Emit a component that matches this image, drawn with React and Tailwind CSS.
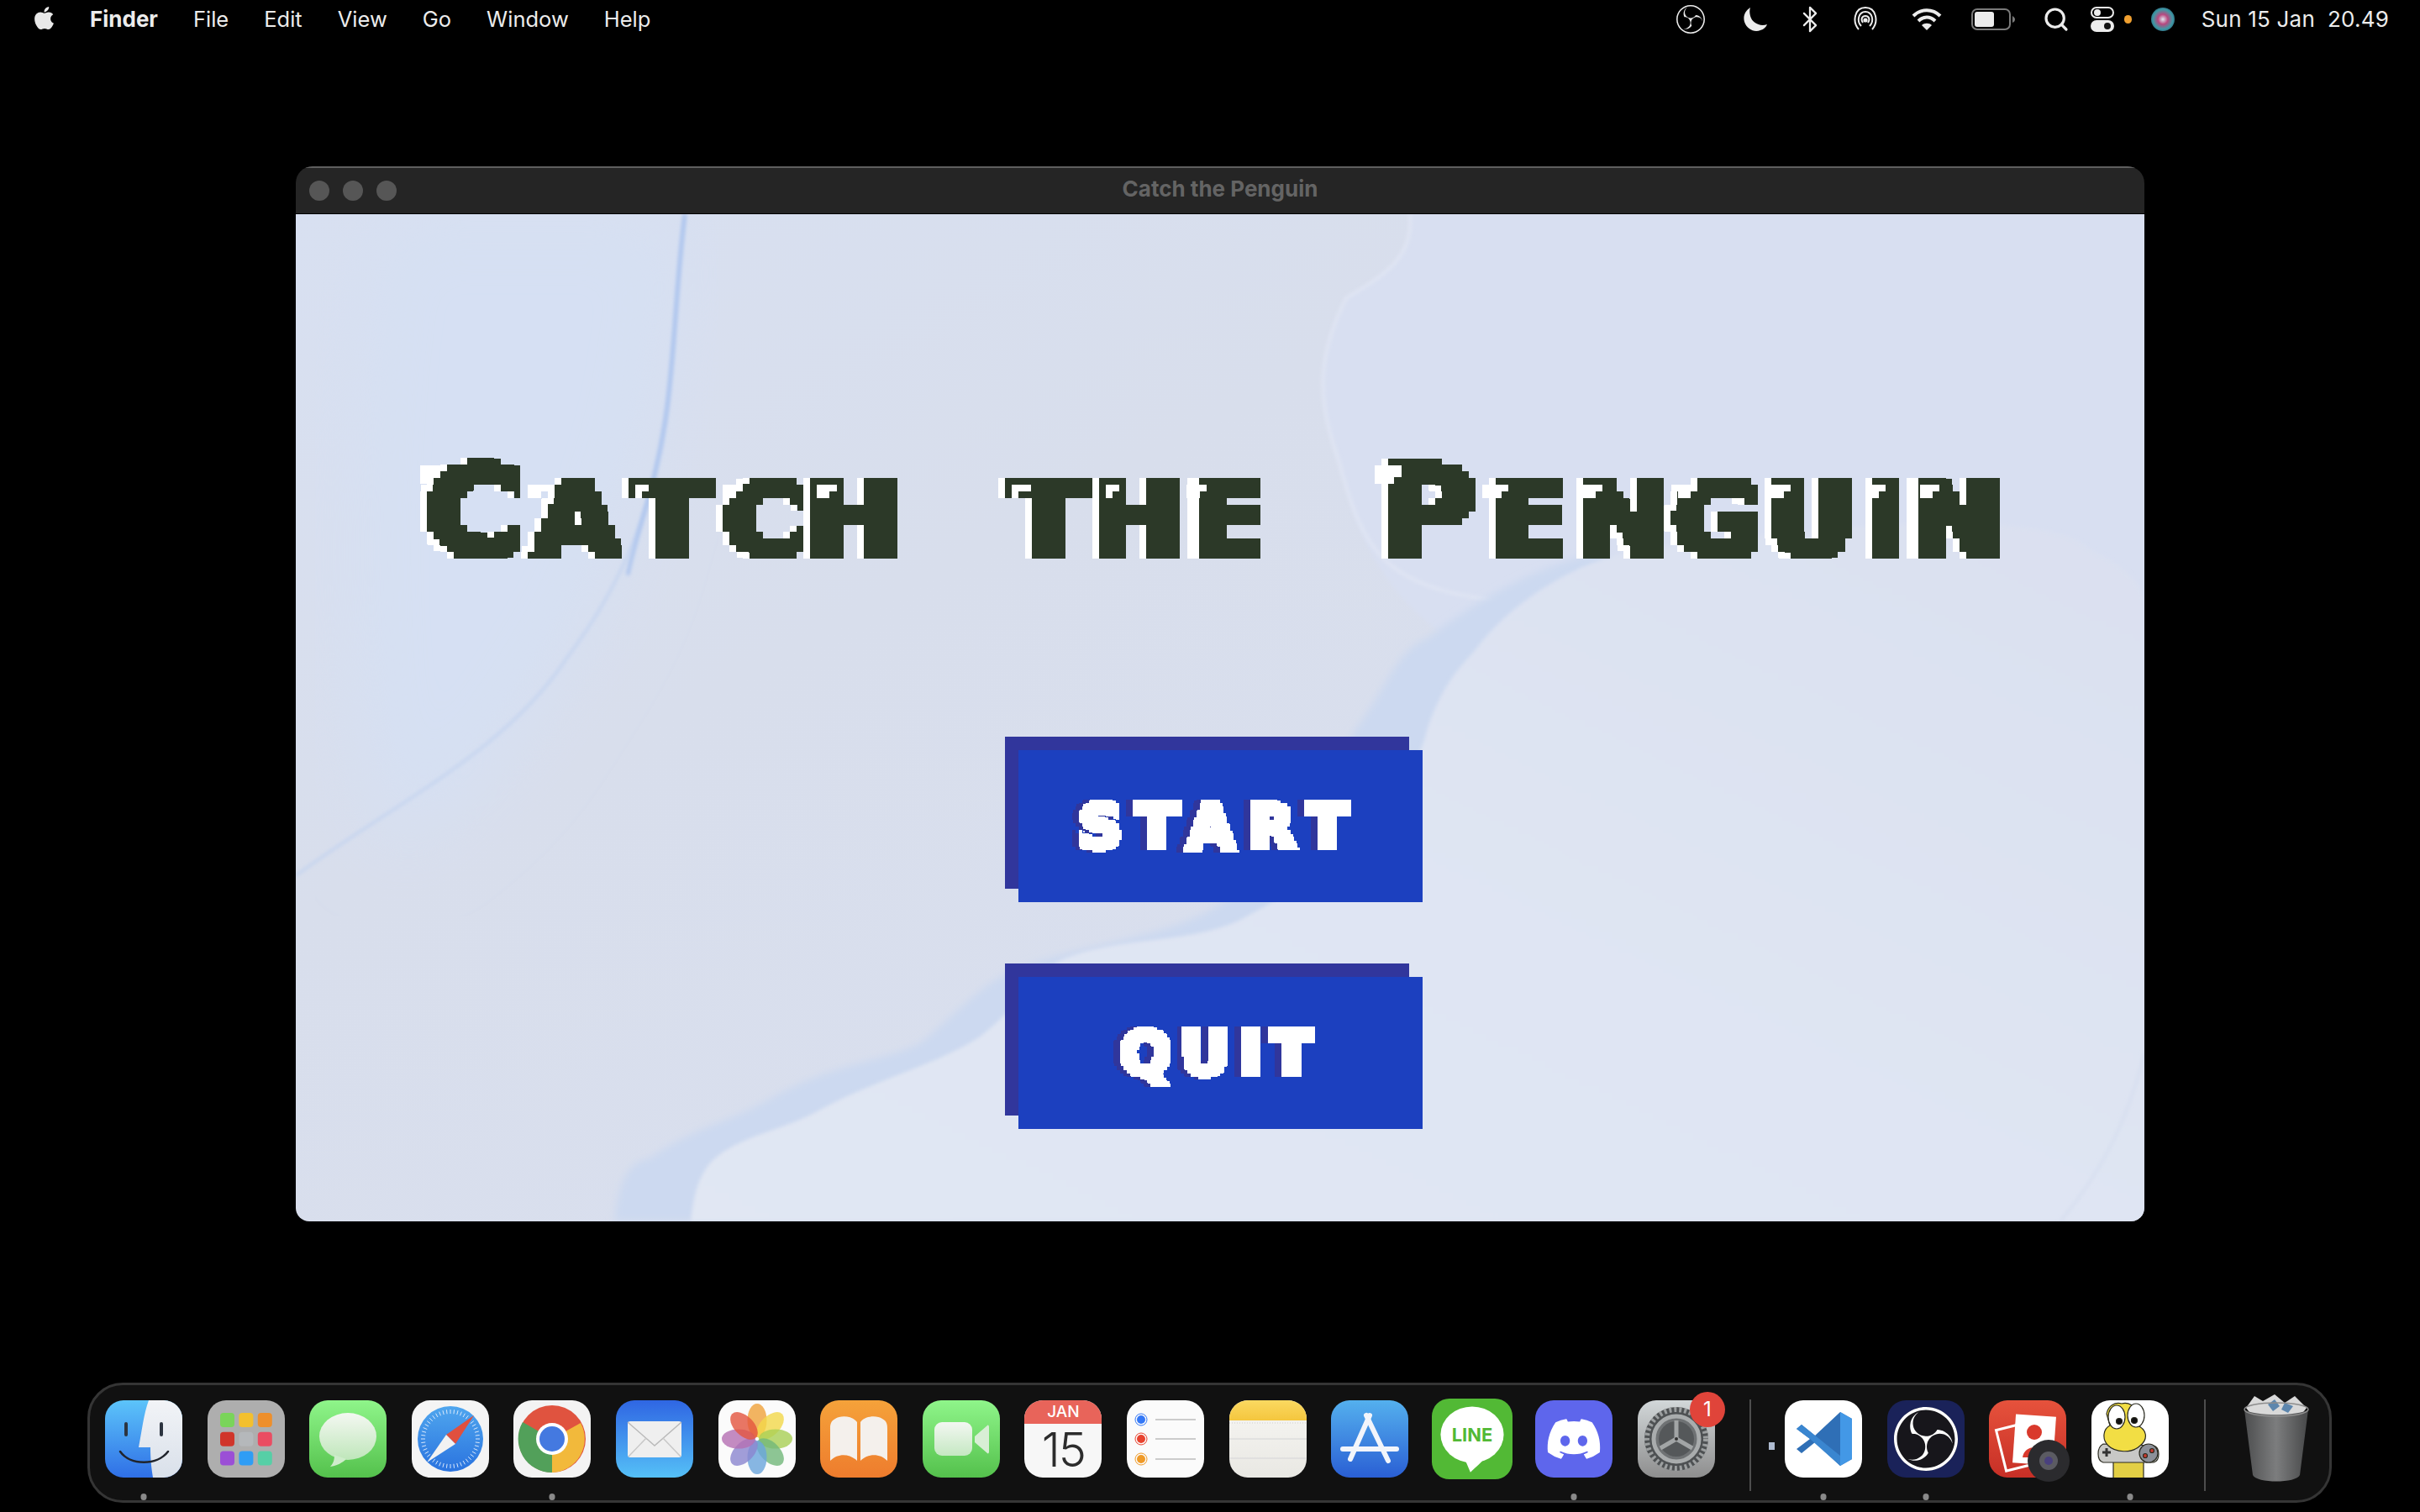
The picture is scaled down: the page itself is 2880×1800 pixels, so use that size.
import React from "react";
import { FaApple, FaDiscord } from "react-icons/fa";
import { SiObsstudio } from "react-icons/si";
import { Search, Bluetooth } from "lucide-react";

const Hl = () => (
  <svg className="absolute left-[16px] top-0" width="16" height="16" viewBox="0 0 2 2">
    <path d="M0 0h2v1H1v1H0z" fill="#ffffff" />
  </svg>
);

const T = [
  ["C", "w-[129px]", true],
  ["a", "w-[118px]"],
  ["t", "w-[109px]"],
  ["c", "w-[109px]"],
  ["h", "w-[106px]"],
  [" ", "w-[125px]"],
  ["t", "w-[107px]"],
  ["h", "w-[107px]"],
  ["e", "w-[108px]"],
  [" ", "w-[120px]"],
  ["P", "w-[127px]", true],
  ["e", "w-[112px]"],
  ["n", "w-[113px]"],
  ["g", "w-[111px]"],
  ["u", "w-[112px]"],
  ["i", "w-[65px]"],
  ["n", "w-[105px]"],
];

function Title() {
  return (
    <h1 className="mt-[282px] ml-[140px] pl-[6px] h-[160px] w-[1960px] flex items-baseline uppercase font-bold text-[#2d3a28] [font-family:'DejaVu_Sans',sans-serif] [filter:drop-shadow(-8px_0_0_#ffffff)_url(#px8)] [-webkit-text-stroke:10px_#2d3a28]">
      {T.map(([c, w, big], i) => (
        <span key={i} className={`${w} relative inline-block text-center whitespace-pre leading-none scale-x-[1.1] ${big ? "text-[145px]" : "text-[120px]"}`}>
          {c}
          {c !== " " && (
            <span className={big ? "absolute left-0 top-[20px]" : "absolute left-0 top-[16px]"}>
              <Hl />
            </span>
          )}
        </span>
      ))}
    </h1>
  );
}

function GameButton({ children, className, track }) {
  return (
    <button className={`w-[481px] h-[181px] bg-[#1c40bf] shadow-[-16px_-16px_0_#31369c] flex items-center justify-center ${className}`}>
      <span className={`px-[20px] py-[4px] text-white text-[72px] leading-none font-bold [font-family:'DejaVu_Sans',sans-serif] [filter:drop-shadow(-8px_0_0_#31369c)_url(#px4)] [-webkit-text-stroke:8px_#ffffff] ${track}`}>
        {children}
      </span>
    </button>
  );
}

const Wallpaper = () => (
  <svg className="absolute inset-0 w-full h-full" viewBox="0 0 2200 1200" preserveAspectRatio="none">
    <defs>
      <linearGradient id="wpBase" x1="0" y1="0" x2="1" y2="1">
        <stop offset="0" stopColor="#d8e0f1" />
        <stop offset="0.35" stopColor="#d8deec" />
        <stop offset="0.7" stopColor="#d9dfee" />
        <stop offset="1" stopColor="#d9dfee" />
      </linearGradient>
      <linearGradient id="wpLight" x1="0" y1="1" x2="1" y2="0">
        <stop offset="0" stopColor="#e1e7f3" />
        <stop offset="0.5" stopColor="#dfe5f3" />
        <stop offset="1" stopColor="#dae0f0" />
      </linearGradient>
      <filter id="b4"><feGaussianBlur stdDeviation="5" /></filter>
      <filter id="b2"><feGaussianBlur stdDeviation="2" /></filter>
      <filter id="b40"><feGaussianBlur stdDeviation="45" /></filter>
    </defs>
    <rect width="2200" height="1200" fill="url(#wpBase)" />
    <path d="M200 0H463C450 120 440 260 400 340C380 460 330 520 280 600C230 680 170 720 120 760C60 720 40 300 100 0z" fill="#d6e0f3" filter="url(#b40)" />
    <path d="M1326 0C1330 50 1300 70 1250 100C1215 170 1215 220 1240 290C1270 400 1290 470 1460 560L2200 560V0z" fill="#d8dff1" filter="url(#b2)" />
    <path d="M463 0C452 90 452 150 442 230C430 340 390 440 323 528C250 640 120 700 0 788" fill="none" stroke="#c3d3ef" strokeWidth="3" filter="url(#b2)" />
    <path d="M463 0C452 90 452 150 442 230C430 320 405 380 395 430" fill="none" stroke="#a9c2ee" strokeWidth="4" filter="url(#b2)" />
    <path d="M1326 0C1330 50 1300 70 1250 100C1215 170 1215 220 1240 290C1270 400 1290 450 1459 463" fill="none" stroke="#e2e7f4" strokeWidth="3" filter="url(#b2)" />
    <path d="M379 1200C385 1150 395 1130 421 1125C470 1090 520 1080 561 1056C640 1010 700 1010 744 987C790 950 820 910 870 895C940 870 1040 860 1094 826C1160 790 1210 700 1263 612C1300 560 1310 520 1347 505C1420 450 1480 420 1543 405L1800 480L1200 1200z" fill="#ccd9f0" filter="url(#b4)" />
    <path d="M470 1200C475 1160 480 1150 491 1133C520 1100 570 1095 617 1071C690 1030 760 1015 814 980C860 945 880 905 912 888C980 860 1060 870 1122 842C1220 790 1320 720 1347 612C1365 560 1385 540 1403 520C1440 470 1490 440 1529 421C1590 395 1640 395 1684 390C1800 375 1880 370 1964 367C2050 370 2110 375 2133 398C2180 420 2195 440 2200 459V1200z" fill="url(#wpLight)" filter="url(#b2)" />
    <path d="M2200 1000C2180 1080 2150 1140 2100 1200" fill="none" stroke="#d6deef" strokeWidth="3" filter="url(#b2)" />
  </svg>
);

/* ----- dock icons ----- */
const Svg = ({ children, className = "w-[92px] h-[92px]" }) => (
  <svg className={`block ${className}`} viewBox="0 0 92 92">{children}</svg>
);
const Clip = ({ id, children }) => (
  <>
    <clipPath id={id}><rect width="92" height="92" rx="22" /></clipPath>
    <g clipPath={`url(#${id})`}>{children}</g>
  </>
);
const Grad = ({ id, a, b }) => (
  <linearGradient id={id} x1="0" y1="0" x2="0" y2="1">
    <stop offset="0" stopColor={a} />
    <stop offset="1" stopColor={b} />
  </linearGradient>
);

const Finder = () => (
  <Svg>
    <defs><Grad id="f1" a="#5cc4fa" b="#2f6fe6" /><Grad id="f2" a="#f2f4f7" b="#d9e0ea" /></defs>
    <Clip id="c1">
      <rect width="92" height="92" fill="url(#f1)" />
      <path d="M52 0H92V92H57C55 80 54 70 54 56H40C44 36 46 16 52 0z" fill="url(#f2)" />
      <rect x="23" y="26" width="4" height="17" rx="2" fill="#2c3440" />
      <rect x="65" y="26" width="4" height="17" rx="2" fill="#2c3440" />
      <path d="M18 61C30 78 62 78 75 61" fill="none" stroke="#20242c" strokeWidth="2.6" strokeLinecap="round" />
    </Clip>
  </Svg>
);

const Launchpad = () => {
  const cols = ["#7ad45a", "#f3c02f", "#ee8f2b", "#d0352a", "#b5b8bb", "#ea4c62", "#9b4fd6", "#2f9df5", "#56cfa6"];
  return (
    <Svg>
      <rect width="92" height="92" rx="22" fill="#aeaeae" />
      {cols.map((c, i) => (
        <rect key={i} x={15 + (i % 3) * 22.4} y={15 + Math.floor(i / 3) * 22.8} width="17" height="17" rx="4" fill={c} />
      ))}
    </Svg>
  );
};

const Messages = () => (
  <Svg>
    <defs><Grad id="m1" a="#8ff58a" b="#54c14c" /><Grad id="m2" a="#f4f8f2" b="#bfe6ba" /></defs>
    <rect width="92" height="92" rx="22" fill="url(#m1)" />
    <ellipse cx="46" cy="43" rx="34" ry="28" fill="url(#m2)" />
    <path d="M30 65C30 72 28 76 25 79C33 78 40 74 44 70z" fill="#cfeccb" />
  </Svg>
);

const Safari = () => {
  const ticks = [];
  for (let i = 0; i < 48; i++) {
    const a = (i / 48) * Math.PI * 2;
    ticks.push(<line key={i} x1={46 + 30 * Math.cos(a)} y1={46 + 30 * Math.sin(a)} x2={46 + 35 * Math.cos(a)} y2={46 + 35 * Math.sin(a)} stroke="#dbe9fb" strokeWidth="1" />);
  }
  return (
    <Svg>
      <defs><Grad id="s1" a="#4fa6ee" b="#2a73df" /></defs>
      <rect width="92" height="92" rx="22" fill="#f4f4f4" />
      <circle cx="46" cy="46" r="39" fill="url(#s1)" />
      {ticks}
      <polygon points="74,18 52,52 41,41" fill="#e0503e" />
      <polygon points="18,74 52,52 41,41" fill="#f2f2f2" />
    </Svg>
  );
};

const Chrome = () => (
  <Svg>
    <rect width="92" height="92" rx="22" fill="#f3f3f3" />
    <circle cx="46" cy="46" r="40" fill="#e0533f" />
    <path d="M46 46L11 26A40 40 0 0 0 46 86L46 86L62 52z" fill="#52a05a" />
    <path d="M46 46L80 27A40 40 0 0 1 46 86z" fill="#f2b93b" />
    <circle cx="46" cy="46" r="19" fill="#fff" />
    <circle cx="46" cy="46" r="15" fill="#4479e0" />
  </Svg>
);

const Mail = () => (
  <Svg>
    <defs><Grad id="ma" a="#2f66e3" b="#55c0f7" /></defs>
    <rect width="92" height="92" rx="22" fill="url(#ma)" />
    <rect x="14" y="25" width="64" height="43" rx="3" fill="#efefef" />
    <path d="M14 26L46 54L78 26" fill="none" stroke="#b9b9b9" strokeWidth="1.5" />
    <path d="M15 67L36 45M77 67L56 45" stroke="#c8c8c8" strokeWidth="1.5" />
  </Svg>
);

const Photos = () => {
  const c = ["#f0a33b", "#f2d84a", "#a9cf55", "#72b87a", "#6aa5dc", "#8b86cf", "#b56fb3", "#e4553f"];
  return (
    <Svg>
      <rect width="92" height="92" rx="22" fill="#fbfbfb" />
      {c.map((col, i) => (
        <ellipse key={i} cx="46" cy="24" rx="11.5" ry="20" fill={col} fillOpacity="0.8" transform={`rotate(${i * 45} 46 46)`} />
      ))}
    </Svg>
  );
};

const Books = () => (
  <Svg>
    <defs><Grad id="b1" a="#f5a23a" b="#ee7c2d" /></defs>
    <rect width="92" height="92" rx="22" fill="url(#b1)" />
    <path d="M44 26C38 18 24 18 18 22C12 25 12 30 12 34V72C22 62 36 64 44 72z" fill="#f4f0ec" />
    <path d="M48 26C54 18 68 18 74 22C80 25 80 30 80 34V72C70 62 56 64 48 72z" fill="#f4f0ec" />
  </Svg>
);

const Facetime = () => (
  <Svg>
    <defs><Grad id="ft" a="#8ff58a" b="#54c14c" /><Grad id="ft2" a="#f3f7f2" b="#c5e8c2" /></defs>
    <rect width="92" height="92" rx="22" fill="url(#ft)" />
    <rect x="14" y="26" width="45" height="40" rx="9" fill="url(#ft2)" />
    <path d="M62 43L77 30C78 29 79 30 79 32V61C79 63 78 64 77 63L62 50z" fill="#d8eed5" />
  </Svg>
);

const Calendar = () => (
  <div className="w-[92px] h-[92px] rounded-[22px] bg-[#f7f7f7] flex flex-col items-center [font-family:Inter,sans-serif]">
    <div className="w-full h-[28px] rounded-t-[22px] bg-[#e8645a] text-white text-[19px] leading-[28px] text-center font-medium">JAN</div>
    <div className="text-[#2c2c2c] text-[56px] leading-[62px] font-light tracking-[-2px]">15</div>
  </div>
);

const Reminders = () => (
  <Svg>
    <rect width="92" height="92" rx="22" fill="#fbfbfb" />
    {[["#3478f6", 23], ["#e8432f", 46], ["#ef9a28", 70]].map(([c, y]) => (
      <g key={y}>
        <circle cx="17" cy={y} r="7" fill="none" stroke={c} strokeWidth="1" />
        <circle cx="17" cy={y} r="5" fill={c} />
        <line x1="34" x2="82" y1={y} y2={y} stroke="#bdbdbd" strokeWidth="1.5" />
      </g>
    ))}
  </Svg>
);

const Notes = () => (
  <Svg>
    <defs><Grad id="n1" a="#fbd961" b="#f4c63e" /><Grad id="n2" a="#f7f6f3" b="#e9e8e3" /></defs>
    <Clip id="c2">
      <rect width="92" height="92" fill="url(#n2)" />
      <rect width="92" height="24" fill="url(#n1)" />
      <line x1="0" x2="92" y1="27" y2="27" stroke="#cfcfcf" strokeWidth="1" strokeDasharray="1 2" />
      <line x1="0" x2="92" y1="46" y2="46" stroke="#dcdcdc" strokeWidth="1.5" />
      <line x1="0" x2="92" y1="69" y2="69" stroke="#dcdcdc" strokeWidth="1.5" />
    </Clip>
  </Svg>
);

const AppStore = () => (
  <Svg>
    <defs><Grad id="as" a="#54b0ee" b="#2a5fd4" /></defs>
    <rect width="92" height="92" rx="22" fill="url(#as)" />
    <g stroke="#f2f5fb" strokeWidth="6" strokeLinecap="round">
      <line x1="14" y1="58" x2="78" y2="58" />
      <line x1="46" y1="18" x2="23" y2="70" />
      <line x1="42" y1="18" x2="68" y2="72" />
    </g>
  </Svg>
);

const Line = () => (
  <svg className="block w-[96px] h-[96px] -ml-[2px] -mt-[2px]" viewBox="0 0 92 92">
    <rect width="92" height="92" rx="20" fill="#52b935" />
    <ellipse cx="46" cy="41" rx="36" ry="32" fill="#fff" />
    <path d="M38 70L44 84C50 78 56 74 60 68z" fill="#fff" />
    <text x="46" y="49" textAnchor="middle" fontSize="21" fontWeight="700" fill="#52b935" fontFamily="Inter, sans-serif">LINE</text>
  </svg>
);

const Discord = () => (
  <div className="w-[92px] h-[92px] rounded-[22px] bg-[#5e66ec] flex items-center justify-center text-white">
    <FaDiscord size={68} />
  </div>
);

const Gear = () => (
  <Svg>
    <defs><Grad id="g1" a="#d2d7d9" b="#8e8e8e" /></defs>
    <rect width="92" height="92" rx="22" fill="url(#g1)" />
    <circle cx="46" cy="46" r="38" fill="#4e5153" />
    <circle cx="46" cy="46" r="35" fill="none" stroke="#9c9fa0" strokeWidth="6" strokeDasharray="3 3" />
    <circle cx="46" cy="46" r="29" fill="#6f7274" />
    <circle cx="46" cy="46" r="27" fill="none" stroke="#a9acad" strokeWidth="5" />
    <circle cx="46" cy="46" r="21" fill="#55585a" />
    <g stroke="#a2a5a6" strokeWidth="5">
      <line x1="46" y1="46" x2="46" y2="24" />
      <line x1="46" y1="46" x2="27" y2="57" />
      <line x1="46" y1="46" x2="65" y2="57" />
    </g>
    <circle cx="46" cy="46" r="2" fill="#333" />
  </Svg>
);

const VSCode = () => (
  <Svg>
    <rect width="92" height="92" rx="22" fill="#fff" />
    <path d="M66 14L80 22V70L66 78L36 50L20 63L14 58L30 46L14 34L20 29L36 42z" fill="#2f6fb6" />
    <path d="M66 14L80 22V70L66 78z" fill="#4398e6" />
    <path d="M14 34L20 29L66 66V78L30 46z" fill="#3a86d0" />
  </Svg>
);

const Obs = () => (
  <div className="w-[92px] h-[92px] rounded-[22px] bg-[#1a2259] flex items-center justify-center text-white">
    <span className="w-[76px] h-[76px] rounded-full bg-[#17161b] flex items-center justify-center">
      <SiObsstudio size={76} />
    </span>
  </div>
);

const PhotoBooth = () => (
  <Svg className="w-[92px] h-[92px] overflow-visible">
    <defs><Grad id="p1" a="#e6523c" b="#c72f26" /></defs>
    <rect width="92" height="92" rx="22" fill="url(#p1)" />
    <rect x="14" y="30" width="40" height="50" fill="none" stroke="#fff" strokeWidth="3" transform="rotate(-14 34 55)" />
    <rect x="30" y="18" width="48" height="58" fill="#fff" transform="rotate(4 54 47)" />
    <circle cx="54" cy="38" r="9" fill="#d9392c" />
    <path d="M40 68C42 52 66 52 68 68z" fill="#d9392c" />
    <circle cx="71" cy="72" r="25" fill="#2b2b2e" />
    <circle cx="71" cy="72" r="11" fill="#5b5b62" />
    <circle cx="71" cy="72" r="5" fill="#49407e" />
  </Svg>
);

const Dino = () => (
  <Svg>
    <clipPath id="c5"><rect width="92" height="92" rx="22" /></clipPath>
    <rect width="92" height="92" rx="22" fill="#fff" />
    <g clipPath="url(#c5)" stroke="#2b2b20" strokeWidth="1.2">
      <rect x="26" y="66" width="36" height="30" fill="#e3cf45" />
      <path d="M14 52C6 56 6 72 14 74L74 74C82 72 82 56 74 54z" fill="#c8c8c6" />
      <circle cx="68" cy="63" r="11" fill="#8c9099" />
      <circle cx="64" cy="66" r="2.5" fill="#c8392f" />
      <circle cx="72" cy="60" r="2.5" fill="#c8392f" />
      <path d="M13 62h10M18 57v10" stroke="#333" strokeWidth="3" />
      <path d="M18 16C20 6 28 2 36 4C44 2 52 6 54 16V30C66 34 68 46 58 54C48 64 28 62 20 54C12 46 14 34 22 30z" fill="#f2de44" />
      <ellipse cx="30" cy="20" rx="10" ry="14" fill="#fff" />
      <ellipse cx="53" cy="18" rx="10" ry="14" fill="#fff" />
      <circle cx="33" cy="25" r="3.5" fill="#111" />
      <circle cx="51" cy="24" r="3.5" fill="#111" />
    </g>
  </Svg>
);

const Trash = () => (
  <svg className="block w-[80px] h-[106px]" viewBox="0 0 80 106">
    <defs>
      <linearGradient id="tr" x1="0" y1="0" x2="1" y2="0">
        <stop offset="0" stopColor="#4d4e4f" />
        <stop offset="0.5" stopColor="#7c7d7e" />
        <stop offset="1" stopColor="#474849" />
      </linearGradient>
    </defs>
    <path d="M4 18L14 4L24 10L38 2L50 12L62 4L76 18L70 26H10z" fill="#d9d9d9" />
    <path d="M30 14l8-6 6 8-8 6zM50 12l10 4-6 8-8-4z" fill="#5d86ad" />
    <path d="M2 20C14 28 66 28 78 20L68 98C64 108 16 108 12 98z" fill="url(#tr)" />
    <ellipse cx="40" cy="20" rx="38" ry="8" fill="none" stroke="#8d8d8d" strokeWidth="1.5" />
  </svg>
);

const Dot = () => <span className="absolute left-1/2 -translate-x-1/2 top-[111px] w-[7px] h-[8px] rounded-full bg-[#8a8a8a]" />;

const Slot = ({ children, dot }) => (
  <div className="relative w-[92px] h-[92px] shrink-0">
    {children}
    {dot && <Dot />}
  </div>
);

function Dock() {
  return (
    <div className="mt-[192px] ml-[104px] w-[2671px] h-[143px] rounded-[42px] bg-[#111111] border-[3px] border-[#353535] flex items-start pl-[18px] pt-[18px] gap-[29.6px]">
      <Slot dot><Finder /></Slot>
      <Slot><Launchpad /></Slot>
      <Slot><Messages /></Slot>
      <Slot><Safari /></Slot>
      <Slot dot><Chrome /></Slot>
      <Slot><Mail /></Slot>
      <Slot><Photos /></Slot>
      <Slot><Books /></Slot>
      <Slot><Facetime /></Slot>
      <Slot><Calendar /></Slot>
      <Slot><Reminders /></Slot>
      <Slot><Notes /></Slot>
      <Slot><AppStore /></Slot>
      <Slot><Line /></Slot>
      <Slot dot><Discord /></Slot>
      <Slot>
        <Gear />
        <span className="absolute left-[62px] -top-[10px] w-[42px] h-[42px] rounded-full bg-[#e0443a] text-white text-[24px] leading-[42px] text-center [font-family:Inter,sans-serif]">1</span>
      </Slot>
      <div className="flex items-start shrink-0 -ml-[29.6px] -mr-[29.6px] pl-[41px] -mt-[18px]">
        <span className="w-[2px] h-[109px] bg-[#4d4d4d] mt-[17px]" />
        <span className="ml-[21px] mt-[68px] w-[7px] h-[9px] bg-[#aebbd0]" />
        <span className="w-[12px]" />
      </div>
      <Slot dot><VSCode /></Slot>
      <Slot dot><Obs /></Slot>
      <Slot><PhotoBooth /></Slot>
      <Slot dot><Dino /></Slot>
      <div className="shrink-0 flex items-start ml-[13px] -mt-[18px]">
        <span className="w-[2px] h-[109px] bg-[#4d4d4d] mt-[17px]" />
        <span className="ml-[44px] mt-[9px]"><Trash /></span>
      </div>
    </div>
  );
}

/* ----- menu bar ----- */
const Moon = () => (
  <svg className="ml-[45px]" width="29" height="30" viewBox="0 0 29 30"><path d="M9 1C3 5 0 11 2 18C5 27 14 31 21 28C25 27 28 24 29 21C20 24 11 19 9 11C8 7 8 4 9 1z" fill="#ececec" /></svg>
);
const AirDrop = () => (
  <svg className="ml-[41px]" width="30" height="32" viewBox="0 0 30 32" fill="none" stroke="#ececec" strokeWidth="2">
    <path d="M7 28C-1 19 2 2 15 2S31 19 23 28" />
    <path d="M10 24C4 18 7 7 15 7S26 18 20 24" />
    <path d="M12 20C9 16 11 12 15 12S21 16 18 20" />
    <circle cx="15" cy="17" r="1.6" fill="#ececec" />
  </svg>
);
const Wifi = () => (
  <svg className="ml-[40px]" width="36" height="28" viewBox="0 0 36 28" fill="none" stroke="#ececec" strokeWidth="4">
    <path d="M2 10C11 1 25 1 34 10" />
    <path d="M8 16C14 10 22 10 28 16" />
    <path d="M18 27L12 21C15 18 21 18 24 21z" fill="#ececec" stroke="none" />
  </svg>
);
const Battery = () => (
  <svg className="ml-[35px]" width="52" height="26" viewBox="0 0 52 26">
    <rect x="1" y="1" width="45" height="24" rx="6" fill="none" stroke="#7a7a7a" strokeWidth="2" />
    <rect x="4" y="4" width="23" height="18" rx="3" fill="#ececec" />
    <path d="M49 9C51 10 52 12 52 13C52 15 51 16 49 17z" fill="#7a7a7a" />
  </svg>
);
const Control = () => (
  <svg className="ml-[28px]" width="28" height="30" viewBox="0 0 28 30">
    <rect x="1" y="1" width="26" height="12" rx="6" fill="none" stroke="#ececec" strokeWidth="2" />
    <circle cx="8" cy="7" r="4" fill="#ececec" />
    <rect x="0" y="16" width="28" height="14" rx="7" fill="#ececec" />
    <circle cx="20" cy="23" r="4" fill="#111" />
  </svg>
);
const Siri = () => (
  <svg className="ml-[23px]" width="28" height="28" viewBox="0 0 28 28">
    <defs>
      <radialGradient id="si" cx="0.5" cy="0.5" r="0.6">
        <stop offset="0" stopColor="#dfe8f0" />
        <stop offset="0.35" stopColor="#b8487f" />
        <stop offset="0.7" stopColor="#3d9aa5" />
        <stop offset="1" stopColor="#2a4a6a" />
      </radialGradient>
    </defs>
    <circle cx="14" cy="14" r="14" fill="url(#si)" />
  </svg>
);

function MenuBar() {
  const items = ["File", "Edit", "View", "Go", "Window", "Help"];
  return (
    <header className="h-[46px] flex items-center justify-between pl-[40px] pr-[37px] text-[#ececec] text-[25.5px] leading-none [font-family:Inter,sans-serif]">
      <nav className="flex items-center gap-[42px]">
        <span className="flex items-center gap-[41px]">
          <FaApple size={31} className="text-[#e8e8e8] -mt-[4px] -ml-[3px] -mr-[2px]" />
          <span className="font-bold text-[26px]">Finder</span>
        </span>
        {items.map((t) => <span key={t}>{t}</span>)}
      </nav>
      <div className="flex items-center">
        <span className="w-[34px] h-[34px] rounded-full flex items-center justify-center"><SiObsstudio size={34} /></span>
        <Moon />
        <Bluetooth size={34} strokeWidth={1.6} className="ml-[34px] -mr-[7px]" />
        <AirDrop />
        <Wifi />
        <Battery />
        <Search size={32} strokeWidth={2.4} className="ml-[33px] -mr-[3px]" />
        <Control />
        <span className="ml-[12px] w-[9px] h-[10px] rounded-full bg-[#f0a030]" />
        <Siri />
        <span className="ml-[32px] whitespace-pre text-[26px] tracking-[0.2px]">Sun 15 Jan  20.49</span>
      </div>
    </header>
  );
}

export default function App() {
  return (
    <div className="w-[2880px] h-[1800px] bg-black overflow-hidden flex flex-col [font-family:Inter,sans-serif]">
      <svg width="0" height="0" className="absolute">
        <defs>
          <filter id="px8" x="-2%" y="-8%" width="104%" height="116%" colorInterpolationFilters="sRGB">
            <feFlood x="3" y="3" width="2" height="2" />
            <feComposite x="0" y="0" width="8" height="8" />
            <feTile result="a" />
            <feComposite in="SourceGraphic" in2="a" operator="in" />
            <feMorphology operator="dilate" radius="3" />
            <feColorMatrix type="matrix" values="1 0 0 0 0 1 0 0 0 0 1 0 0 0 0 0 0 0 1 0" />
            <feComponentTransfer>
              <feFuncR type="discrete" tableValues="0.176 1" />
              <feFuncG type="discrete" tableValues="0.227 1" />
              <feFuncB type="discrete" tableValues="0.157 1" />
              <feFuncA type="discrete" tableValues="0 1" />
            </feComponentTransfer>
          </filter>
          <filter id="px4" x="-8%" y="-8%" width="116%" height="116%" colorInterpolationFilters="sRGB">
            <feFlood x="1" y="1" width="2" height="2" />
            <feComposite x="0" y="0" width="4" height="4" />
            <feTile result="a" />
            <feComposite in="SourceGraphic" in2="a" operator="in" />
            <feMorphology operator="dilate" radius="1" />
            <feColorMatrix type="matrix" values="1 0 0 0 0 1 0 0 0 0 1 0 0 0 0 0 0 0 1 0" />
            <feComponentTransfer>
              <feFuncR type="discrete" tableValues="0.192 1" />
              <feFuncG type="discrete" tableValues="0.212 1" />
              <feFuncB type="discrete" tableValues="0.612 1" />
              <feFuncA type="discrete" tableValues="0 1" />
            </feComponentTransfer>
          </filter>
        </defs>
      </svg>
      <MenuBar />
      <section className="mt-[152px] ml-[352px] w-[2200px] h-[1256px] flex flex-col rounded-t-[20px] rounded-b-[16px] overflow-hidden shrink-0">
        <div className="h-[57px] shrink-0 bg-[#252525] border-t-2 border-t-[#5f5f5f] border-b border-b-black grid grid-cols-[1fr_auto_1fr] items-center">
          <div className="flex gap-[16px] pl-[16px]">
            <span className="w-[24px] h-[24px] rounded-full bg-[#565656]" />
            <span className="w-[24px] h-[24px] rounded-full bg-[#565656]" />
            <span className="w-[24px] h-[24px] rounded-full bg-[#565656]" />
          </div>
          <div className="text-[#646464] text-[26px] leading-none font-bold pb-[5px]">Catch the Penguin</div>
          <div />
        </div>
        <main className="relative flex-1 flex flex-col items-start">
          <Wallpaper />
          <div className="relative w-full flex flex-col">
            <Title />
            <GameButton className="ml-[860px] mt-[196px]" track="tracking-[17px]">START</GameButton>
            <GameButton className="ml-[860px] mt-[89px]" track="tracking-[11px]">QUIT</GameButton>
          </div>
        </main>
      </section>
      <Dock />
    </div>
  );
}
